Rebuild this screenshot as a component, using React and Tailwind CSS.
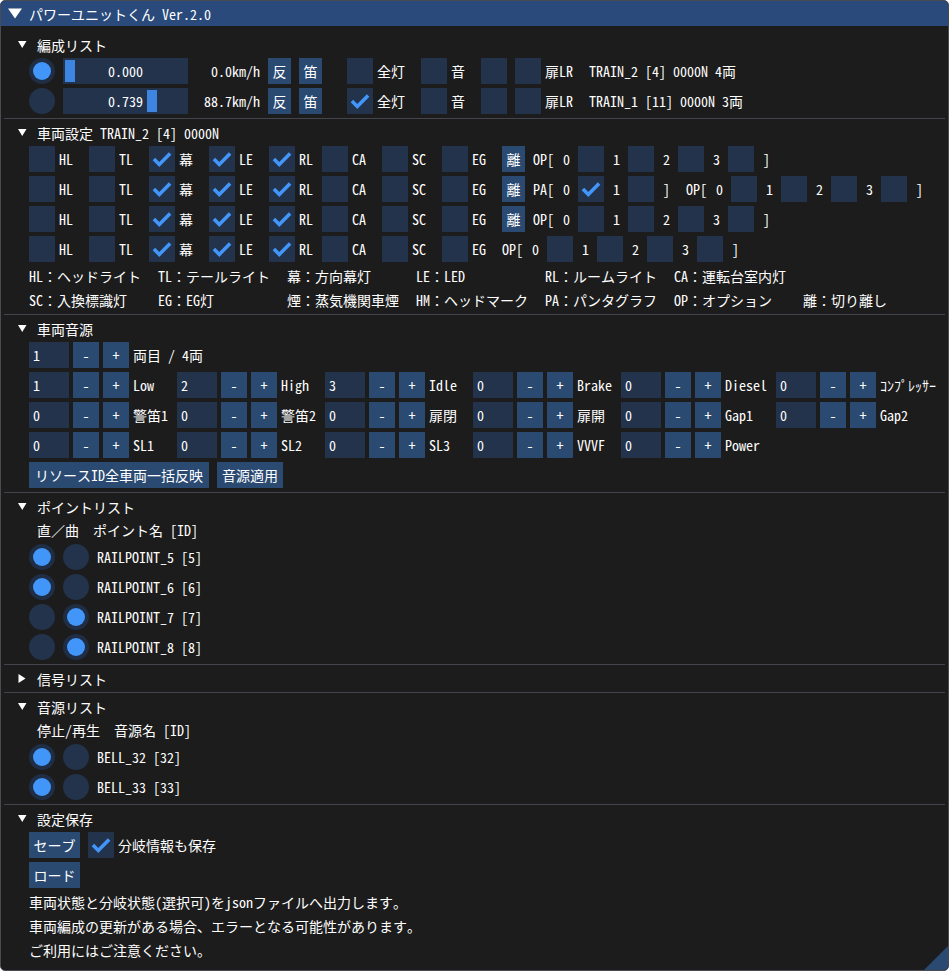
import { Fragment } from "react";

const frame = "bg-[#22334b]";
const button = "bg-[#2a4a72]";

function Check({ on }) {
  return (
    <span className={`flex h-[26px] w-[26px] shrink-0 ${frame}`}>
      {on && (
        <svg width="26" height="26" viewBox="0 0 26 26">
          <path d="M4.9 13 L10.3 18.4 L21.1 7.6" fill="none" stroke="#4296fa" strokeWidth="3.6" />
        </svg>
      )}
    </span>
  );
}

function Radio({ on }) {
  return (
    <span className={`flex h-[26px] w-[26px] shrink-0 items-center justify-center rounded-full ${on ? "bg-[#1f2e45]" : frame}`}>
      {on && <span className="h-[18px] w-[18px] rounded-full bg-[#4296fa]" />}
    </span>
  );
}

function Btn({ w, className = "", children }) {
  return (
    <span className={`flex h-[26px] shrink-0 items-center justify-center ${button} ${w} ${className}`}>
      {children}
    </span>
  );
}

function Slider({ v, text }) {
  return (
    <span className={`relative ml-2 flex h-[26px] w-[125px] items-center justify-center ${frame}`}>
      <span className="absolute top-[2px] h-[22px] w-[10px] bg-[#3d85e0]" style={{ left: 2 + v * 111 }} />
      <span className="relative">{text}</span>
    </span>
  );
}

function Arrow({ open }) {
  return (
    <svg width="9" height="9" viewBox="0 0 9 9" className="ml-[14px] mr-[10px] shrink-0">
      {open ? <polygon points="0,1 8.5,1 4.25,8" fill="#fff" /> : <polygon points="0.5,0 7.5,4.5 0.5,9" fill="#fff" />}
    </svg>
  );
}

function Header({ open = true, children }) {
  return (
    <div className="flex h-[19px] items-center">
      <Arrow open={open} />
      <span>{children}</span>
    </div>
  );
}

function Sep() {
  return <div className="h-px shrink-0 bg-[#44444c]" />;
}

function Row({ children }) {
  return <div className="flex h-[26px] items-center pl-[25px]">{children}</div>;
}

function Line({ className = "", children }) {
  return <div className={`flex h-[20px] items-center whitespace-pre ${className}`}>{children}</div>;
}

// 編成リスト の1行
function TrainRow({ sel, v, text, speed, light, name }) {
  return (
    <Row>
      <Radio on={sel} />
      <Slider v={v} text={text} />
      <span className="ml-2 w-[64px] text-right">{speed}</span>
      <Btn w="w-[23px]" className="ml-2">反</Btn>
      <Btn w="w-[23px]" className="ml-2">笛</Btn>
      <span className="ml-[25px]"><Check on={light} /></span>
      <span className="ml-1">全灯</span>
      <span className="ml-4"><Check /></span>
      <span className="ml-1">音</span>
      <span className="ml-4"><Check /></span>
      <span className="ml-2"><Check /></span>
      <span className="ml-1">扉LR</span>
      <span className="ml-4">{name}</span>
    </Row>
  );
}

function Light({ label, on, w = "w-[52px]" }) {
  return (
    <span className={`flex shrink-0 items-center ${w}`}>
      <Check on={on} />
      <span className="ml-1">{label}</span>
    </span>
  );
}

function Bits({ name, bits, className = "" }) {
  return (
    <span className={`flex items-center ${className}`}>
      <span>{name}[</span>
      {bits.map((on, i) => (
        <Fragment key={i}>
          <span className="ml-[9px]">{i}</span>
          <span className="ml-[8px]"><Check on={on} /></span>
        </Fragment>
      ))}
      <span className="ml-[9px]">]</span>
    </span>
  );
}

function CarRow({ cut, pa }) {
  return (
    <Row>
      <span className="flex gap-2">
        <Light label="HL" />
        <Light label="TL" />
        <Light label="幕" on />
        <Light label="LE" on />
        <Light label="RL" on w="w-[45px]" />
        <Light label="CA" />
        <Light label="SC" />
        <Light label="EG" />
      </span>
      {cut && <Btn w="w-[23px]" className="ml-2">離</Btn>}
      {pa && <Bits name="PA" bits={[true, false]} className="ml-2" />}
      <Bits name="OP" bits={[false, false, false, false]} className={pa ? "ml-4" : "ml-2"} />
    </Row>
  );
}

function IntInput({ v, label, w = "min-w-[140px]" }) {
  return (
    <span className={`flex items-center ${w}`}>
      <span className={`flex h-[26px] w-[40px] items-center pl-[4px] ${frame}`}>{v}</span>
      <Btn w="w-[26px]" className="ml-1">-</Btn>
      <Btn w="w-[26px]" className="ml-1">+</Btn>
      <span className="ml-1 whitespace-pre">{label}</span>
    </span>
  );
}

function SoundRow({ items }) {
  return (
    <Row>
      <span className="flex gap-2">
        {items.map(([v, label], i) => (
          <IntInput key={label} v={v} label={label} w={i === 4 ? "w-[147px]" : "min-w-[140px]"} />
        ))}
      </span>
    </Row>
  );
}

function PairRow({ first, label }) {
  return (
    <Row>
      <Radio on={first} />
      <span className="ml-2"><Radio on={!first} /></span>
      <span className="ml-2">{label}</span>
    </Row>
  );
}

const legend = [
  ["HL：ヘッドライト", "TL：テールライト", "幕：方向幕灯", "LE：LED", "RL：ルームライト", "CA：運転台室内灯"],
  ["SC：入換標識灯", "EG：EG灯", "煙：蒸気機関車煙", "HM：ヘッドマーク", "PA：パンタグラフ", "OP：オプション", "離：切り離し"],
];

export default function App() {
  return (
    <div className="relative flex h-[971px] w-[949px] flex-col overflow-hidden rounded-[5px] border border-[#4a4a54] bg-[#1c1c1c] font-['Noto_Sans_Mono_CJK_JP','Noto_Sans_CJK_JP',monospace] text-[14px] leading-[20px] text-white">
      {/* タイトルバー */}
      <div className="flex h-[25px] shrink-0 items-center bg-[#294a7a]">
        <svg width="14" height="11" viewBox="0 0 14 11" className="ml-[7px] mr-[7px]">
          <polygon points="0,0.5 14,0.5 7,10.5" fill="#fff" />
        </svg>
        <span>パワーユニットくん Ver.2.0</span>
      </div>

      <div className="flex flex-col gap-1 px-[3px] pt-[9px]">
        {/* 編成リスト */}
        <Header>編成リスト</Header>
        <TrainRow sel v={0} text="0.000" speed="0.0km/h" name="TRAIN_2 [4] 0000N 4両" />
        <TrainRow v={0.739} text="0.739" speed="88.7km/h" light name="TRAIN_1 [11] 0000N 3両" />
        <Sep />

        {/* 車両設定 */}
        <Header>車両設定 TRAIN_2 [4] 0000N</Header>
        <CarRow cut />
        <CarRow cut pa />
        <CarRow cut />
        <CarRow />
        {legend.map((line, i) => (
          <Line key={i} className="pl-[25px]">
            <span className="grid grid-cols-[repeat(7,129px)]">
              {line.map((t) => (
                <span key={t}>{t}</span>
              ))}
            </span>
          </Line>
        ))}
        <Sep />

        {/* 車両音源 */}
        <Header>車両音源</Header>
        <Row>
          <IntInput v="1" label="両目 / 4両" />
        </Row>
        <SoundRow items={[["1", "Low"], ["2", "High"], ["3", "Idle"], ["0", "Brake"], ["0", "Diesel"], ["0", "ｺﾝﾌﾟﾚｯｻｰ"]]} />
        <SoundRow items={[["0", "警笛1"], ["0", "警笛2"], ["0", "扉閉"], ["0", "扉開"], ["0", "Gap1"], ["0", "Gap2"]]} />
        <SoundRow items={[["0", "SL1"], ["0", "SL2"], ["0", "SL3"], ["0", "VVVF"], ["0", "Power"]]} />
        <Row>
          <Btn w="w-[180px]">リソースID全車両一括反映</Btn>
          <Btn w="w-[66px]" className="ml-2">音源適用</Btn>
        </Row>
        <Sep />

        {/* ポイントリスト */}
        <Header>ポイントリスト</Header>
        <Line className="pl-[33px]">直／曲  ポイント名 [ID]</Line>
        <PairRow first label="RAILPOINT_5 [5]" />
        <PairRow first label="RAILPOINT_6 [6]" />
        <PairRow label="RAILPOINT_7 [7]" />
        <PairRow label="RAILPOINT_8 [8]" />
        <Sep />

        <Header open={false}>信号リスト</Header>
        <Sep />

        {/* 音源リスト */}
        <Header>音源リスト</Header>
        <Line className="pl-[33px]">停止/再生  音源名 [ID]</Line>
        <PairRow first label="BELL_32 [32]" />
        <PairRow first label="BELL_33 [33]" />
        <Sep />

        {/* 設定保存 */}
        <Header>設定保存</Header>
        <Row>
          <Btn w="w-[51px]">セーブ</Btn>
          <span className="ml-2"><Check on /></span>
          <span className="ml-1">分岐情報も保存</span>
        </Row>
        <Row>
          <Btn w="w-[51px]">ロード</Btn>
        </Row>
        <Line className="pl-[25px]">車両状態と分岐状態(選択可)をjsonファイルへ出力します。</Line>
        <Line className="pl-[25px]">車両編成の更新がある場合、エラーとなる可能性があります。</Line>
        <Line className="pl-[25px]">ご利用にはご注意ください。</Line>
      </div>

      {/* リサイズグリップ */}
      <svg width="24" height="24" viewBox="0 0 24 24" className="absolute bottom-0 right-0">
        <polygon points="24,0 24,24 0,24" fill="#2a4a72" />
      </svg>
    </div>
  );
}
